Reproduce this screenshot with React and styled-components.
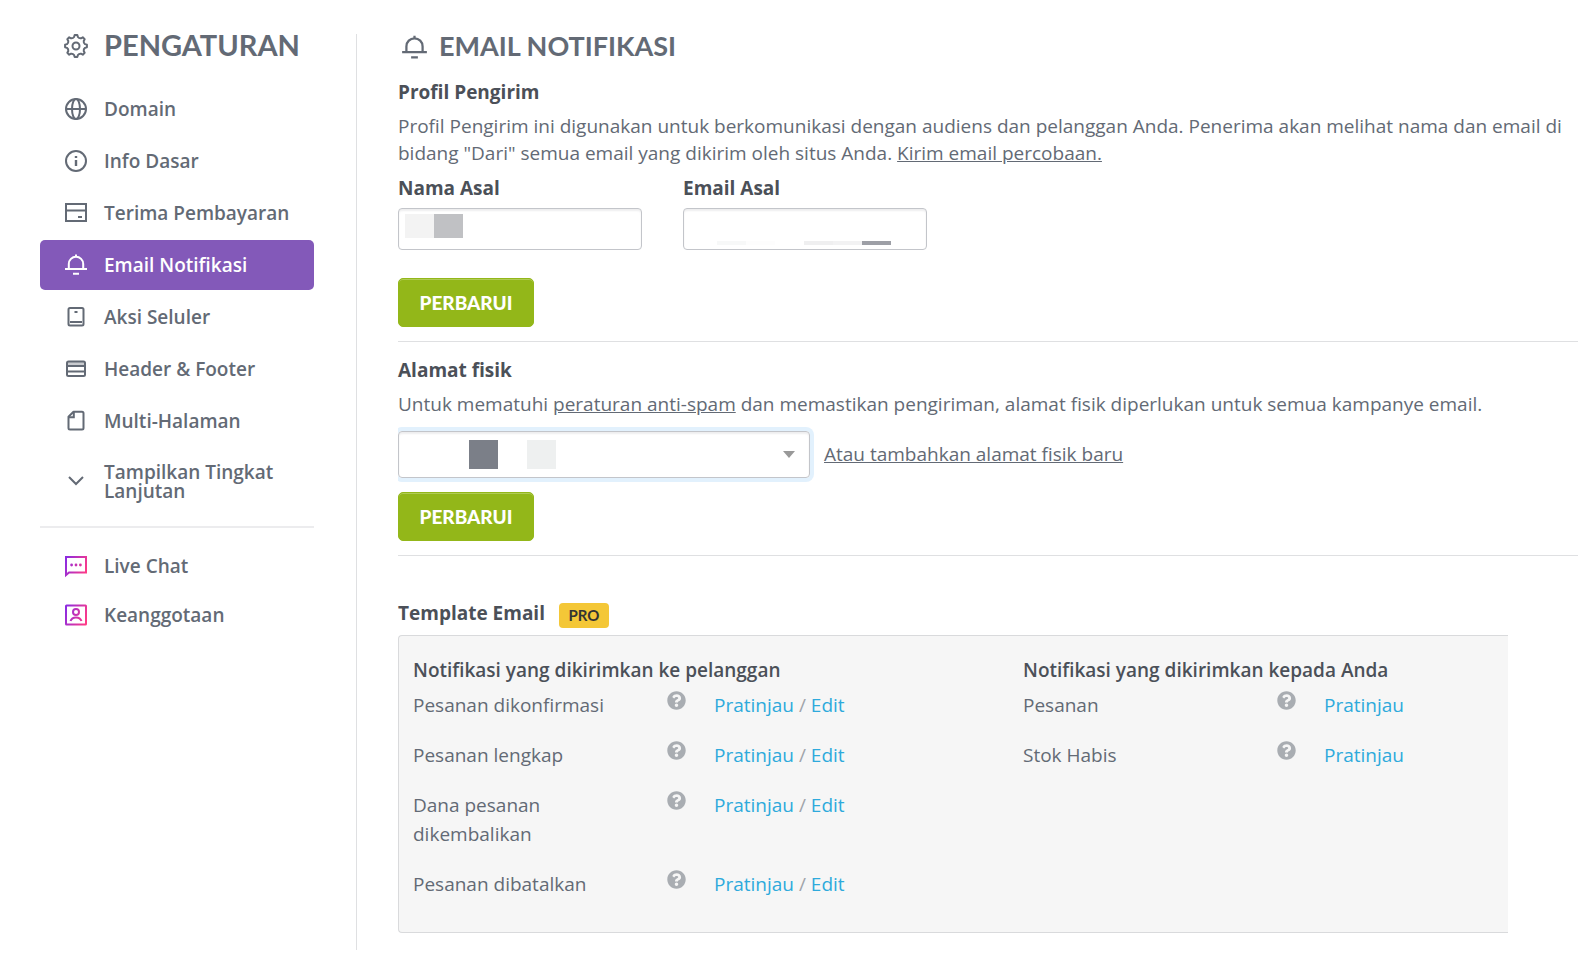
import React from "react";
import styled, { createGlobalStyle, css } from "styled-components";
import { FaQuestionCircle } from "react-icons/fa";

const slate = "#636a75";
const ink = "#4b5058";
const line = "#dfe0e2";
const bodyFont = `"Open Sans", "Noto Sans", sans-serif`;
const displayFont = `Lato, "Open Sans", sans-serif`;

const GlobalStyle = createGlobalStyle`
  * { box-sizing: border-box; }
  body {
    margin: 0;
    background: #fff;
    color: ${slate};
    font: 400 19px/27px ${bodyFont};
    overflow-x: hidden;
  }
`;

const Page = styled.div`
  display: flex;
  align-items: stretch;
  min-height: 100vh;
  padding: 34px 0 4px;
`;

const Sidebar = styled.aside`
  flex: none;
  width: 357px;
  padding: 0 42px 0 40px;
  border-right: 1px solid ${line};
`;

const IconBox = styled.svg.attrs({
  viewBox: "0 0 24 24",
  fill: "none",
  stroke: "currentColor",
  strokeWidth: 2,
  "aria-hidden": true,
})`
  flex: none;
  width: ${(p) => p.$size || 24}px;
  height: ${(p) => p.$size || 24}px;
`;

const SidebarTitle = styled.h1`
  display: flex;
  align-items: center;
  gap: 16px;
  height: 24px;
  margin: 0 0 26px;
  padding-left: 24px;
  font: 700 29px/24px ${displayFont};
`;

const TitleText = styled.span`
  padding-bottom: 2px;
`;

const NavList = styled.ul`
  display: flex;
  flex-direction: column;
  gap: 2px;
  margin: 0;
  padding: 0;
  list-style: none;
`;

const NavLink = styled.a`
  display: flex;
  align-items: center;
  gap: 16px;
  min-height: ${(p) => (p.$compact ? 47 : 50)}px;
  padding: 0 24px;
  border-radius: 5px;
  color: ${slate};
  font-weight: 600;
  line-height: 20px;
  text-decoration: none;
  ${(p) =>
    p.$active &&
    css`
      background: #8359b9;
      color: #fff;
    `}
`;

const AdvancedToggle = styled.button`
  display: flex;
  align-items: center;
  gap: 16px;
  width: 100%;
  min-height: 66px;
  margin-top: 3px;
  padding: 0 24px;
  border: 0;
  background: none;
  color: ${slate};
  font: 600 19px/19px ${bodyFont};
  text-align: left;
`;

const SidebarRule = styled.hr`
  height: 2px;
  margin: 11px 0 14px;
  border: 0;
  background: #ececee;
`;

const Main = styled.main`
  flex: 1;
  min-width: 0;
  padding: 0 0 16px 41px;
`;

const PageTitle = styled.h2`
  display: flex;
  align-items: center;
  gap: 11px;
  height: 26px;
  margin: 0 0 18px;
  padding-left: 3px;
  font: 700 27px/26px ${displayFont};
`;

const Section = styled.section`
  margin-bottom: 14px;
  padding-bottom: 14px;
  border-bottom: 1px solid ${line};
`;

const SectionTitle = styled.h3`
  margin: 0 0 7px;
  color: ${ink};
  font-size: 19px;
  font-weight: 700;
  line-height: 28px;
`;

const Copy = styled.p`
  margin: 0;
`;

const TextLink = styled.a`
  color: inherit;
  text-decoration: underline;
`;

const Fields = styled.div`
  display: flex;
  gap: 41px;
  margin: 8px 0 28px;
`;

const Field = styled.label`
  display: flex;
  flex-direction: column;
  gap: 6px;
  width: 244px;
  color: ${ink};
  font-weight: 700;
`;

const Control = styled.span`
  display: grid;

  > * {
    grid-area: 1 / 1;
  }
`;

const FocusedControl = styled(Control)`
  width: 412px;
  border-radius: 4px;
  box-shadow: 0 0 0 4px #e2f1fd;
  clip-path: inset(-4px -4px -4px 0);
`;

const fieldBox = css`
  width: 100%;
  border: 1px solid #c3c5ca;
  border-radius: 4px;
  background: #fff;
  box-shadow: inset 0 2px 2px #eeeeef;
  font: 400 19px/27px ${bodyFont};
`;

const TextInput = styled.input`
  ${fieldBox}
  height: 42px;
  padding: 0 8px;
`;

const Redaction = styled.span`
  display: flex;
  align-self: ${(p) => p.$align};
  height: ${(p) => p.$height}px;
  margin: ${(p) => p.$margin};
  pointer-events: none;
`;

const Block = styled.span`
  width: 29px;
  background: ${(p) => p.$tone};
`;

const AddressRow = styled.div`
  display: flex;
  align-items: center;
  gap: 14px;
  margin: 13px 0 14px;
`;

const AddressSelect = styled.select`
  ${fieldBox}
  height: 47px;
  padding: 0 40px 0 12px;
  appearance: none;
`;

const Caret = styled.span`
  place-self: center end;
  margin-right: 15px;
  border: 6px solid transparent;
  border-top: 7px solid #999;
  border-bottom: 0;
  pointer-events: none;
`;

const PrimaryButton = styled.button`
  display: block;
  width: 136px;
  height: 49px;
  padding: 0;
  border: 1px solid #93b719;
  border-radius: 5px;
  background: #93b719;
  box-shadow: inset 0 1px 0 #b0cb55;
  color: #fff;
  font: 900 19px/24px ${displayFont};
`;

const TemplateHead = styled.div`
  display: flex;
  align-items: flex-start;
  gap: 14px;
  margin: 43px 0 7px;
`;

const TemplateTitle = styled(SectionTitle)`
  margin: 0;
`;

const ProBadge = styled.span`
  width: 50px;
  margin-top: 4px;
  padding-bottom: 1px;
  border-radius: 4px;
  background: #f4c737;
  color: #333;
  font: 700 15px/24px ${displayFont};
  text-align: center;
`;

const Panel = styled.div`
  display: grid;
  grid-template-columns: 610px 1fr;
  min-height: 298px;
  margin-right: 70px;
  padding: 20px 0 28px 14px;
  border: 1px solid #d9dadc;
  border-right: 0;
  border-radius: 4px 0 0 4px;
  background: #f6f6f6;
`;

const GroupTitle = styled.h4`
  margin: 0 0 7px;
  color: ${ink};
  font-size: 19px;
  font-weight: 600;
  line-height: 28px;
`;

const TemplateList = styled.ul`
  display: flex;
  flex-direction: column;
  gap: 21px;
  margin: 0;
  padding: 0;
  list-style: none;
`;

const TemplateRow = styled.li`
  display: grid;
  grid-template-columns: 254px 47px auto;
  justify-content: start;
  line-height: 29px;
`;

const TemplateName = styled.span`
  max-width: 200px;
`;

const HelpButton = styled.button`
  display: flex;
  width: 19px;
  height: 19px;
  padding: 0;
  border: 0;
  background: none;
  color: #a9adb2;
  font-size: 19px;
`;

const Actions = styled.span`
  color: #a0a4aa;
`;

const ActionLink = styled.a`
  color: #2eaadc;
  text-decoration: none;
`;

const polar = (r, deg) => {
  const a = (deg * Math.PI) / 180;
  return `${(12 + r * Math.cos(a)).toFixed(2)} ${(12 + r * Math.sin(a)).toFixed(2)}`;
};

const gearPath =
  [0, 45, 90, 135, 180, 225, 270, 315]
    .map(
      (a, i) =>
        `${i ? "L" : "M"}${polar(11, a - 7)} L${polar(11, a + 7)} L${polar(9.2, a + 12)} Q${polar(8, a + 22.5)} ${polar(9.2, a + 33)}`
    )
    .join(" ") + "Z";

const GearIcon = () => (
  <IconBox>
    <path d={gearPath} strokeLinejoin="round" />
    <circle cx="12" cy="12" r="3.5" />
  </IconBox>
);

const GlobeIcon = () => (
  <IconBox>
    <circle cx="12" cy="12" r="10" />
    <ellipse cx="12" cy="12" rx="4" ry="10" />
    <path d="M2 12h20" />
  </IconBox>
);

const InfoIcon = () => (
  <IconBox>
    <circle cx="12" cy="12" r="10" />
    <path d="M12 11v6M12 7v2" strokeWidth="2.400" />
  </IconBox>
);

const CardIcon = () => (
  <IconBox>
    <path d="M2 3h20v17H2zM2 9.5h20M14 16h4" />
  </IconBox>
);

const BellIcon = (props) => (
  <IconBox {...props}>
    <path d="M4.800 16v-5a7.200 7.200 0 0 1 14.400 0v5M1 16h22M9 20.800h6M12 1.500v2" />
  </IconBox>
);

const PhoneIcon = () => (
  <IconBox>
    <rect x="4.500" y="3" width="15" height="17.500" rx="1.500" />
    <path d="M6 17h12M10.500 7h3" />
  </IconBox>
);

const LayoutIcon = () => (
  <IconBox>
    <path d="M3 5h18v4H3z" fill="currentColor" fillOpacity="0.35" stroke="none" />
    <rect x="3" y="4.500" width="18" height="14.500" rx="1.500" />
    <path d="M3 9h18M3 14.500h18" strokeWidth="1.800" />
  </IconBox>
);

const PageIcon = () => (
  <IconBox>
    <path d="M9.500 2.800H18a1.500 1.500 0 0 1 1.500 1.500V19a1.500 1.500 0 0 1-1.500 1.500H6A1.500 1.500 0 0 1 4.500 19V7.800z" strokeLinejoin="round" />
    <path d="M9.800 3v5.300H4.800" />
  </IconBox>
);

const ChevronIcon = () => (
  <IconBox>
    <path d="M5 7l7 7 7-7" />
  </IconBox>
);

const BrandGradient = ({ id }) => (
  <defs>
    <linearGradient id={id} x1="1" y1="8" x2="23" y2="16" gradientUnits="userSpaceOnUse">
      <stop offset="0" stopColor="#8d2be0" />
      <stop offset="1" stopColor="#ff3a86" />
    </linearGradient>
  </defs>
);

const ChatIcon = () => (
  <IconBox>
    <BrandGradient id="chat-tone" />
    <path d="M2 21V3h20v15.500H5z" stroke="url(#chat-tone)" />
    <g fill="url(#chat-tone)" stroke="none">
      <circle cx="7.600" cy="11" r="1.400" />
      <circle cx="12" cy="11" r="1.400" />
      <circle cx="16.400" cy="11" r="1.400" />
    </g>
  </IconBox>
);

const MemberIcon = () => (
  <IconBox>
    <BrandGradient id="member-tone" />
    <g stroke="url(#member-tone)">
      <rect x="2" y="2.500" width="20" height="19" rx="0.500" />
      <circle cx="12" cy="9" r="3" />
      <path d="M6.500 18c1-2.800 3.200-3.600 5.500-3.600s4.500.8 5.500 3.600" />
    </g>
  </IconBox>
);

const navItems = [
  ["Domain", GlobeIcon],
  ["Info Dasar", InfoIcon],
  ["Terima Pembayaran", CardIcon],
  ["Email Notifikasi", BellIcon],
  ["Aksi Seluler", PhoneIcon],
  ["Header & Footer", LayoutIcon],
  ["Multi-Halaman", PageIcon],
];

const supportItems = [
  ["Live Chat", ChatIcon],
  ["Keanggotaan", MemberIcon],
];

const groups = [
  {
    title: "Notifikasi yang dikirimkan ke pelanggan",
    editable: true,
    rows: ["Pesanan dikonfirmasi", "Pesanan lengkap", "Dana pesanan dikembalikan", "Pesanan dibatalkan"],
  },
  {
    title: "Notifikasi yang dikirimkan kepada Anda",
    editable: false,
    rows: ["Pesanan", "Stok Habis"],
  },
];

const NavItems = ({ items, active, compact }) => (
  <NavList>
    {items.map(([label, Icon]) => (
      <li key={label}>
        <NavLink
          href="#"
          $active={label === active}
          $compact={compact}
          aria-current={label === active ? "page" : undefined}
        >
          <Icon />
          {label}
        </NavLink>
      </li>
    ))}
  </NavList>
);

export default function App() {
  return (
    <>
      <GlobalStyle />
      <Page>
        <Sidebar>
          <SidebarTitle>
            <GearIcon />
            <TitleText>PENGATURAN</TitleText>
          </SidebarTitle>
          <nav>
            <NavItems items={navItems} active="Email Notifikasi" />
            <AdvancedToggle type="button" aria-expanded="false">
              <ChevronIcon />
              Tampilkan Tingkat Lanjutan
            </AdvancedToggle>
            <SidebarRule />
            <NavItems items={supportItems} compact />
          </nav>
        </Sidebar>

        <Main>
          <PageTitle>
            <BellIcon $size={27} />
            <TitleText>EMAIL NOTIFIKASI</TitleText>
          </PageTitle>

          <Section>
            <SectionTitle>Profil Pengirim</SectionTitle>
            <Copy>
              Profil Pengirim ini digunakan untuk berkomunikasi dengan audiens dan pelanggan Anda. Penerima akan
              melihat nama dan email di bidang "Dari" semua email yang dikirim oleh situs Anda.{" "}
              <TextLink href="#">Kirim email percobaan.</TextLink>
            </Copy>
            <Fields>
              <Field>
                Nama Asal
                <Control>
                  <TextInput type="text" />
                  <Redaction $align="start" $height={24} $margin="6px 0 0 7px">
                    <Block $tone="#f3f3f3" />
                    <Block $tone="#c0c1c4" />
                  </Redaction>
                </Control>
              </Field>
              <Field>
                Email Asal
                <Control>
                  <TextInput type="email" />
                  <Redaction $align="end" $height={4} $margin="0 0 5px 34px">
                    <Block $tone="#f7f8f8" />
                    <Block $tone="#fdfdfd" />
                    <Block $tone="transparent" />
                    <Block $tone="#efeff0" />
                    <Block $tone="#f2f2f3" />
                    <Block $tone="#9d9fa6" />
                  </Redaction>
                </Control>
              </Field>
            </Fields>
            <PrimaryButton type="button">PERBARUI</PrimaryButton>
          </Section>

          <Section>
            <SectionTitle>Alamat fisik</SectionTitle>
            <Copy>
              Untuk mematuhi <TextLink href="#">peraturan anti-spam</TextLink> dan memastikan pengiriman, alamat fisik
              diperlukan untuk semua kampanye email.
            </Copy>
            <AddressRow>
              <FocusedControl>
                <AddressSelect aria-label="Alamat fisik" />
                <Redaction $align="center" $height={29} $margin="0 0 0 71px">
                  <Block $tone="#7b7f88" />
                  <Block $tone="transparent" />
                  <Block $tone="#eef0f0" />
                </Redaction>
                <Caret />
              </FocusedControl>
              <TextLink href="#">Atau tambahkan alamat fisik baru</TextLink>
            </AddressRow>
            <PrimaryButton type="button">PERBARUI</PrimaryButton>
          </Section>

          <TemplateHead>
            <TemplateTitle>Template Email</TemplateTitle>
            <ProBadge>PRO</ProBadge>
          </TemplateHead>
          <Panel>
            {groups.map((group) => (
              <div key={group.title}>
                <GroupTitle>{group.title}</GroupTitle>
                <TemplateList>
                  {group.rows.map((name) => (
                    <TemplateRow key={name}>
                      <TemplateName>{name}</TemplateName>
                      <HelpButton type="button" aria-label={`Bantuan: ${name}`}>
                        <FaQuestionCircle />
                      </HelpButton>
                      <Actions>
                        <ActionLink href="#">Pratinjau</ActionLink>
                        {group.editable && (
                          <>
                            {" / "}
                            <ActionLink href="#">Edit</ActionLink>
                          </>
                        )}
                      </Actions>
                    </TemplateRow>
                  ))}
                </TemplateList>
              </div>
            ))}
          </Panel>
        </Main>
      </Page>
    </>
  );
}
